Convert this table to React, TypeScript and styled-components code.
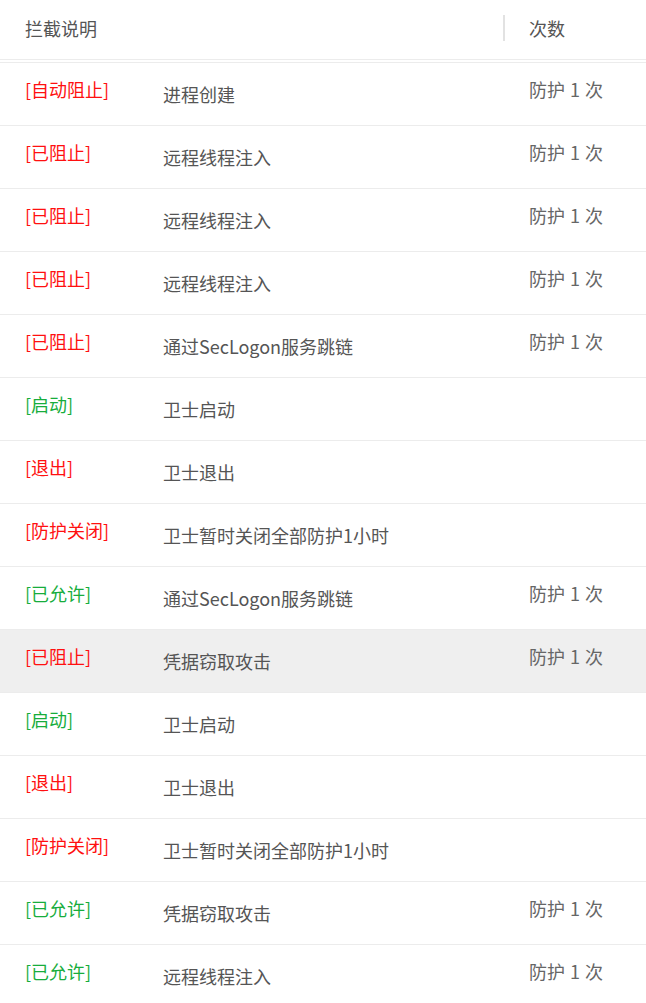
import React from 'react';
import styled, { createGlobalStyle } from 'styled-components';

const GlobalStyle = createGlobalStyle`
  body {
    margin: 0;
    background: #fff;
    font-family: "Noto Sans CJK SC", "Noto Sans", sans-serif;
  }
`;

const Table = styled.div`
  width: 646px;
  display: flex;
  flex-direction: column;
`;

const Header = styled.div`
  display: grid;
  grid-template-columns: 503px 1fr;
  height: 63px;
  box-sizing: border-box;
  padding-bottom: 4px;
  align-items: center;
  border-bottom: 4px double #ececec;
  color: #555;
  font-size: 18px;
`;

const HeadCell = styled.div`
  padding-left: 25px;
  line-height: 20px;
`;

const HeadCount = styled.div`
  display: flex;
  align-items: center;
  gap: 24px;
  height: 26px;
  &::before {
    content: '';
    width: 2px;
    height: 26px;
    background: #e2e2e2;
  }
`;

const Row = styled.div<{ $active?: boolean }>`
  display: grid;
  grid-template-columns: 138px 366px 1fr;
  height: 63px;
  box-sizing: border-box;
  border-bottom: 1px solid #ececec;
  background: ${(p) => (p.$active ? '#efefef' : '#fff')};
  font-size: 18px;
  padding-left: 25px;
`;

const Status = styled.div<{ $ok: boolean }>`
  color: ${(p) => (p.$ok ? '#17ad3c' : '#ff1010')};
  padding-top: 14px;
  line-height: 24px;
  white-space: nowrap;
`;

const Desc = styled.div`
  color: #555;
  padding-top: 19px;
  line-height: 24px;
  white-space: nowrap;
`;

const Count = styled.div`
  color: #666;
  padding-top: 14px;
  line-height: 24px;
  white-space: nowrap;
  word-spacing: 1px;
`;

type Item = { status: string; ok: boolean; desc: string; count?: boolean };

const items: Item[] = [
  { status: '[自动阻止]', ok: false, desc: '进程创建', count: true },
  { status: '[已阻止]', ok: false, desc: '远程线程注入', count: true },
  { status: '[已阻止]', ok: false, desc: '远程线程注入', count: true },
  { status: '[已阻止]', ok: false, desc: '远程线程注入', count: true },
  { status: '[已阻止]', ok: false, desc: '通过SecLogon服务跳链', count: true },
  { status: '[启动]', ok: true, desc: '卫士启动' },
  { status: '[退出]', ok: false, desc: '卫士退出' },
  { status: '[防护关闭]', ok: false, desc: '卫士暂时关闭全部防护1小时' },
  { status: '[已允许]', ok: true, desc: '通过SecLogon服务跳链', count: true },
  { status: '[已阻止]', ok: false, desc: '凭据窃取攻击', count: true },
  { status: '[启动]', ok: true, desc: '卫士启动' },
  { status: '[退出]', ok: false, desc: '卫士退出' },
  { status: '[防护关闭]', ok: false, desc: '卫士暂时关闭全部防护1小时' },
  { status: '[已允许]', ok: true, desc: '凭据窃取攻击', count: true },
  { status: '[已允许]', ok: true, desc: '远程线程注入', count: true },
];

const App = () => (
  <>
    <GlobalStyle />
    <Table>
      <Header>
        <HeadCell>拦截说明</HeadCell>
        <HeadCount>次数</HeadCount>
      </Header>
      {items.map((it, i) => (
        <Row key={i} $active={i === 9}>
          <Status $ok={it.ok}>{it.status}</Status>
          <Desc>{it.desc}</Desc>
          <Count>{it.count ? '防护 1 次' : ''}</Count>
        </Row>
      ))}
    </Table>
  </>
);

export default App;
